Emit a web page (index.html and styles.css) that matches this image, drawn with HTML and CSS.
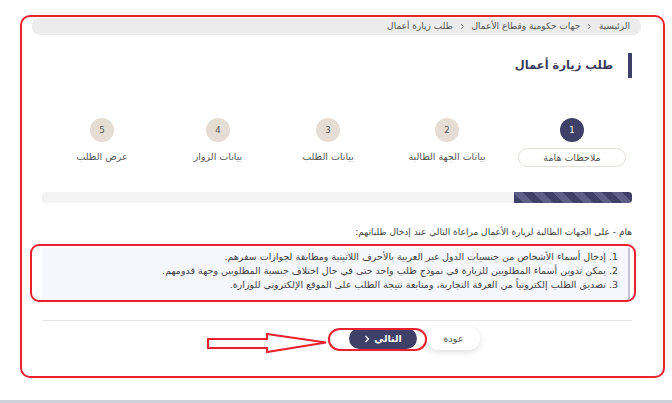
FILE: index.html
```html
<!DOCTYPE html>
<html lang="ar" dir="rtl">
<head>
    <meta charset="UTF-8">
    <meta name="viewport" content="width=device-width, initial-scale=1.0">
    <title>طلب زيارة أعمال</title>
    <link rel="stylesheet" href="styles.css">
</head>
<body>
    <div class="frame">
        <nav class="crumbs">
            <span>الرئيسية</span>
            <svg class="sep" width="5" height="7" viewBox="0 0 5 7"><path d="M1 1 L3.5 3.5 L1 6" fill="none" stroke="#777" stroke-width="1"/></svg>
            <span>جهات حكومية وقطاع الأعمال</span>
            <svg class="sep" width="5" height="7" viewBox="0 0 5 7"><path d="M1 1 L3.5 3.5 L1 6" fill="none" stroke="#777" stroke-width="1"/></svg>
            <span>طلب زيارة أعمال</span>
        </nav>

        <main class="card">
            <h1 class="page-title">طلب زيارة أعمال</h1>

            <ol class="steps">
                <li class="step active"><span class="step-num">1</span><span class="step-label">ملاحظات هامة</span></li>
                <li class="step"><span class="step-num">2</span><span class="step-label">بيانات الجهة الطالبة</span></li>
                <li class="step"><span class="step-num">3</span><span class="step-label">بيانات الطلب</span></li>
                <li class="step"><span class="step-num">4</span><span class="step-label">بيانات الزوار</span></li>
                <li class="step"><span class="step-num">5</span><span class="step-label">عرض الطلب</span></li>
            </ol>

            <div class="progress">
                <div class="progress-fill" style="width: 20%"></div>
            </div>

            <p class="note-lead">هام - على الجهات الطالبة لزيارة الأعمال مراعاة التالي عند إدخال طلباتهم:</p>

            <div class="note-box">
                <ol class="note-list">
                    <li>1. إدخال أسماء الأشخاص من جنسيات الدول غير العربية بالأحرف اللاتينية ومطابقة لجوازات سفرهم.</li>
                    <li>2. يمكن تدوين أسماء المطلوبين للزيارة في نموذج طلب واحد حتى في حال اختلاف جنسية المطلوبين وجهة قدومهم.</li>
                    <li>3. تصديق الطلب إلكترونياً من الغرفة التجارية، ومتابعة نتيجة الطلب على الموقع الإلكتروني للوزارة.</li>
                </ol>
                <!-- annotation -->
                <span class="mark mark-box"></span>
            </div>

            <div class="actions">
                <button class="btn btn-back" type="button">عودة</button>
                <button class="btn btn-next" type="button">التالي
                    <svg width="6" height="8" viewBox="0 0 6 8"><path d="M1.5 1 L4.5 4 L1.5 7" fill="none" stroke="#fff" stroke-width="1.2"/></svg>
                </button>

                <!-- annotations -->
                <span class="mark mark-btn"></span>
                <svg class="mark-arrow" width="122" height="22" viewBox="0 0 122 22">
                    <polygon points="1,6 60,6 60,1 119,9.5 60,19 60,15 1,15" fill="none" stroke="#e8202f" stroke-width="2"/>
                </svg>
            </div>
        </main>
    </div>
    <div class="page-bottom"></div>
</body>
</html>
```

FILE: styles.css
```css
* {
    margin: 0;
    padding: 0;
    box-sizing: border-box;
}

body {
    font-family: "DejaVu Sans", sans-serif;
    background-color: #fff;
    color: #444;
    height: 403px;
    overflow: hidden;
}

/* red frame around the page */
.frame {
    margin: 15px 7px 0 20px;
    height: 363px;
    border: 2px solid #e8202f;
    border-radius: 10px;
    padding: 1px 22px 0 10px;
}

.crumbs {
    height: 17px;
    background-color: #ececec;
    border-radius: 8px;
    padding: 0 11px;
    font-size: 9px;
    line-height: 17px;
    color: #555;
}

.crumbs .sep {
    margin: 0 4px;
    vertical-align: -0.5px;
}

.card {
    padding: 0 9px 0 10px;
}

.page-title {
    margin-top: 18px;
    height: 25px;
    border-right: 4px solid #3f4068;
    padding-right: 15px;
    font-size: 11.5px;
    line-height: 25px;
    color: #3a3b5a;
}

/* Steps */
.steps {
    margin-top: 40px;
    display: grid;
    grid-template-columns: 120px 130px 108px 112px 120px;
    list-style: none;
}

.step {
    display: flex;
    flex-direction: column;
    align-items: center;
}

.step-num {
    width: 24px;
    height: 24px;
    border-radius: 50%;
    background-color: #e5ddd4;
    color: #555;
    font-size: 8.5px;
    display: flex;
    align-items: center;
    justify-content: center;
}

.step-label {
    margin-top: 6px;
    height: 19px;
    line-height: 18px;
    font-size: 9.5px;
    color: #555;
    white-space: nowrap;
}

.step.active .step-num {
    background-color: #3f4068;
    color: #fff;
}

.step.active .step-label {
    width: 108px;
    border: 1px solid #e3dfda;
    border-radius: 10px;
    text-align: center;
}

/* Progress */
.progress {
    margin-top: 25px;
    height: 11px;
    background-color: #f3f3f3;
    border-radius: 3px;
    overflow: hidden;
}

.progress-fill {
    height: 100%;
    border-radius: 0 3px 3px 0;
    background: repeating-linear-gradient(45deg, #3f4068 0 7px, #5d5f88 7px 14px);
}

.note-lead {
    margin-top: 22px;
    font-size: 9px;
    line-height: 14px;
    color: #444;
}

.note-box {
    position: relative;
    margin: 9px 2px 0 0;
    background-color: #f6f6fd;
    border-right: 2px solid #c3c3d3;
    padding: 2px 10px 8px;
}

.note-list {
    list-style: none;
    font-size: 9.5px;
    line-height: 14px;
    color: #444;
}

/* Buttons */
.actions {
    position: relative;
    margin-top: 20px;
    border-top: 1px solid #e6e6e6;
    padding: 6px 152px 0 0;
    display: flex;
    align-items: center;
    gap: 10px;
}

.btn {
    font-family: inherit;
    border: none;
    height: 23px;
    border-radius: 12px;
    font-size: 9.5px;
    cursor: pointer;
}

.btn-back {
    width: 53px;
    background-color: #fff;
    color: #555;
    box-shadow: 0 2px 6px rgba(0, 0, 0, 0.13);
}

.btn-next {
    width: 68px;
    height: 21px;
    background-color: #3f4068;
    color: #fff;
    font-weight: bold;
    display: flex;
    align-items: center;
    justify-content: center;
    gap: 4px;
}

/* red annotation marks */
.mark {
    position: absolute;
    border: 2px solid #e8202f;
    pointer-events: none;
}

.mark-box {
    top: -4px;
    bottom: -2px;
    left: -12px;
    right: -8px;
    border-radius: 9px;
}

.mark-btn {
    left: 286px;
    top: 7px;
    width: 99px;
    height: 23px;
    border-radius: 12px / 11px;
}

.mark-arrow {
    position: absolute;
    left: 165px;
    top: 12px;
}

.page-bottom {
    margin-top: 22px;
    height: 3px;
    background-color: #cfd0da;
}
```
